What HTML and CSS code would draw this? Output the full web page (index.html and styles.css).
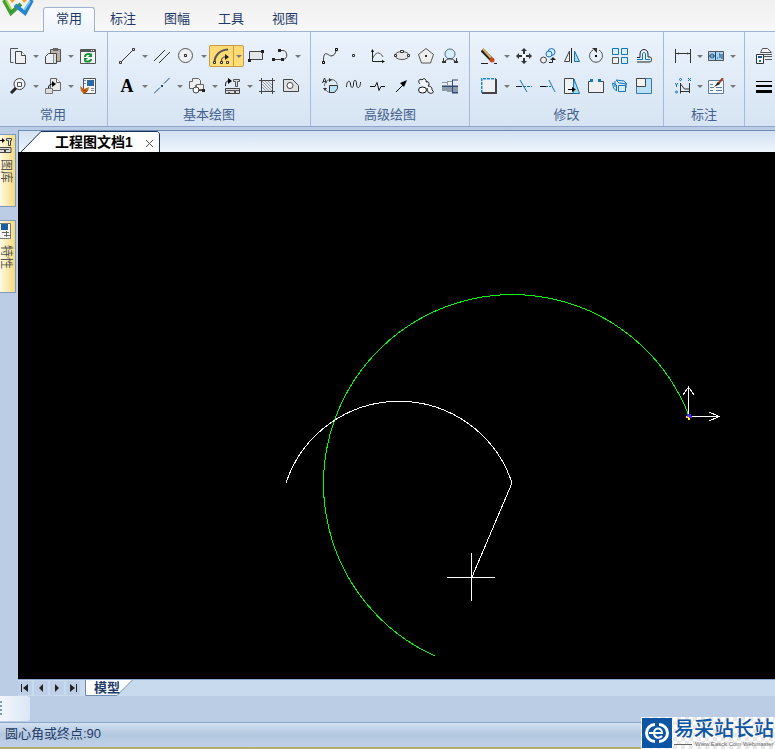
FILE: index.html
```
<!DOCTYPE html>
<html lang="zh-CN">
<head>
<meta charset="UTF-8">
<meta name="viewport" content="width=device-width, initial-scale=1.0">
<title>工程图文档1</title>
<link rel="stylesheet" href="styles.css">
</head>
<body>

<!-- Menu tabs -->
<header class="menubar">
    <svg class="app-logo" width="34" height="16" viewBox="0 0 34 16">
        <path d="M3 0L10 13L20 4" fill="none" stroke="#3d9b35" stroke-width="4"/>
        <path d="M5 0L10 9" stroke="#a8d64a" stroke-width="2"/>
        <path d="M14 5L24 13L31 0" fill="none" stroke="#2a84c8" stroke-width="4"/>
        <path d="M23 10L29 1" stroke="#7cc8f0" stroke-width="2"/>
        <path d="M9 0h5l-3 3zM21 0h5l-3 3z" fill="#f5a020"/>
    </svg>
    <nav class="menu-tabs">
        <button class="menu-tab active">常用</button>
        <button class="menu-tab">标注</button>
        <button class="menu-tab">图幅</button>
        <button class="menu-tab">工具</button>
        <button class="menu-tab">视图</button>
    </nav>
</header>

<!-- Ribbon -->
<section class="ribbon">
    <div class="group">
        <div class="tools">
            <button class="tool" aria-label="复制"><svg viewBox="0 0 16 16"><path d="M3.500 14.500H.5V.5H8" fill="none" stroke="#555"/><path d="M5.500 3.500h6l4 4v8h-10z" fill="#f0f0f0" stroke="#444"/><path d="M11.500 3.500v4h4" fill="#fff" stroke="#444"/></svg></button>
            <button class="drop" aria-label="复制选项"></button>
            <button class="tool" aria-label="粘贴"><svg viewBox="0 0 16 16"><path d="M5.500 1.500h10v12h-10z" fill="#b9b2a5" stroke="#555"/><path d="M8 0h5v3H8z" fill="#666"/><path d="M.5 8.500l3-3h5v10h-8z" fill="#e8f0f6" stroke="#444"/><path d="M8.500 5.500h3v10h-3" fill="#ddd" stroke="#444"/></svg></button>
            <button class="drop" aria-label="粘贴选项"></button>
            <button class="tool" aria-label="刷新"><svg viewBox="0 0 16 16"><path d="M.5 1.500h15v14H.5z" fill="#f2f6f4" stroke="#555"/><path d="M1 1h14v3H1z" fill="#555"/><path d="M11 2h1v1h-1zM13 2h1v1h-1z" fill="#fff"/><path d="M5 9c0-3 4-4 6-2M11 11c0 3-4 3-6 2" fill="none" stroke="#139038" stroke-width="2"/><path d="M12 5v4H8zM4 14v-4h4z" fill="#139038"/></svg></button>
        </div>
        <div class="tools">
            <button class="tool" aria-label="缩放"><svg viewBox="0 0 16 16"><circle cx="9.500" cy="6" r="5.500" fill="#eef3f7" stroke="#444"/><path d="M7.500 4.500h4v4h-4z" fill="#fff" stroke="#555"/><path d="M6 10l-5 5" stroke="#222" stroke-width="3"/></svg></button>
            <button class="drop" aria-label="缩放选项"></button>
            <button class="tool" aria-label="插入"><svg viewBox="0 0 16 16"><path d="M5.500.5h6l4 4v8h-10z" fill="#e8eaec" stroke="#666"/><path d="M11.500.5v4h4" fill="#fff" stroke="#666"/><path d="M.5 10.500h7v5h-7z" fill="#ddd" stroke="#777"/><path d="M3.500 10c0-3 2-4 4-4" fill="none" stroke="#000"/><path d="M7 3l4 3-4 3z"/></svg></button>
            <button class="drop" aria-label="插入选项"></button>
            <button class="tool" aria-label="特性匹配"><svg viewBox="0 0 16 16"><path d="M3.500.5h12v15h-12z" fill="#f4f6f8" stroke="#555"/><path d="M7 2h7v6H7z" fill="#2c67a8"/><path d="M4 2h2v1H4zM4 5h2v1H4zM11 10h3v1h-3zM11 12h3v1h-3z" fill="#789"/><path d="M0 8l4 3 5-2-1 4-4 3-3-3z" fill="#c86a18"/><path d="M3 13l3-1M4 15l3-2" stroke="#8a4008"/></svg></button>
        </div>
        <div class="group-name">常用</div>
    </div>

    <div class="group">
        <div class="tools">
            <button class="tool" aria-label="直线"><svg viewBox="0 0 16 16"><path d="M2 14L14 2" stroke="#333"/><path d="M.5 13.500h2v2h-2zM13.500.5h2v2h-2z" fill="#fff" stroke="#333"/></svg></button>
            <button class="drop" aria-label="直线选项"></button>
            <button class="tool" aria-label="平行线"><svg viewBox="0 0 16 16"><path d="M0 13L11 2M5 15L16 4" stroke="#2f3326"/></svg></button>
            <button class="tool" aria-label="圆"><svg viewBox="0 0 16 16"><circle cx="7.500" cy="7.500" r="7" fill="#eef1f4" stroke="#555"/><path d="M6.500 6.500h2v2h-2z" fill="#fff" stroke="#222"/></svg></button>
            <button class="drop" aria-label="圆选项"></button>
            <span class="split">
                <button class="tool" aria-label="圆弧"><svg viewBox="0 0 16 16"><path d="M1.500 14C2 7 7 2 15 1.500" fill="none" stroke="#555" stroke-width="2"/><path d="M8.500 14c0-4 1-5 4-5" fill="none" stroke="#222"/><path d="M12 6l4 3-4 3z" fill="#222"/><path d="M.5 13.500h2v2h-2zM7.500 13.500h2v2h-2zM13.500 13.500h2v2h-2z" fill="#fff" stroke="#333"/></svg></button>
                <button class="drop" aria-label="圆弧选项"></button>
            </span>
            <button class="tool" aria-label="矩形"><svg viewBox="0 0 16 16"><path d="M1.500 3.500h13v8h-13z" fill="#e3e6e9" stroke="#444"/><path d="M0 11h3v3H0zM13 2h3v3h-3z" fill="#222"/></svg></button>
            <button class="tool" aria-label="多段线"><svg viewBox="0 0 16 16"><path d="M7 2.500h4c5 0 5 9 0 9H1" fill="none" stroke="#444"/><path d="M6 1h3v3H6zM0 10h3v3H0zM9 10h3v3H9z" fill="#222"/></svg></button>
            <button class="drop" aria-label="多段线选项"></button>
        </div>
        <div class="tools">
            <button class="tool glyph" aria-label="文字">A</button>
            <button class="drop" aria-label="文字选项"></button>
            <button class="tool" aria-label="中心线"><svg viewBox="0 0 16 16"><path d="M0 15.500L6 9.500M10 5.500L15.500 0" stroke="#1c4a78"/><path d="M7 7h2v2H7z" fill="#1c4a78"/></svg></button>
            <button class="drop" aria-label="中心线选项"></button>
            <button class="tool" aria-label="轮廓"><svg viewBox="0 0 16 16"><path d="M3.500.5h6l2 2v5h-5v3h-6v-7h3z" fill="#eee" stroke="#666"/><path d="M7.500 6.500h7v5h-7z" fill="#eee" stroke="#666"/><circle cx="7" cy="12" r="3" fill="#fff" stroke="#444"/><path d="M9 12.500h5" stroke="#444"/><path d="M13 11h3v3h-3z" fill="#222"/></svg></button>
            <button class="drop" aria-label="轮廓选项"></button>
            <button class="tool" aria-label="图库"><svg viewBox="0 0 16 16"><path d="M1.500 8c0-4 1-5 3-5" fill="none" stroke="#000"/><path d="M4 0l4 3-4 3z"/><path d="M9.500 1.500h6v2h-2v5h-2v-5h-2z" fill="#ddd" stroke="#555"/><path d="M1.500 10.500h14v5h-14z" fill="#ddd" stroke="#444"/><path d="M2 12h13v1H2zM4 14h2v1H4zM10 13h2v2h-2z" fill="#555"/></svg></button>
            <button class="drop" aria-label="图库选项"></button>
            <button class="tool" aria-label="剖面线"><svg viewBox="0 0 16 16"><path d="M2.500 0v16M13.500 0v16M0 2.500h16M0 13.500h16" stroke="#444"/><path d="M3 9l4 4M3 6l7 7M3 3l10 10M6 3l7 7M9 3l4 4" stroke="#999"/></svg></button>
            <button class="tool" aria-label="填充"><svg viewBox="0 0 16 16"><path d="M.5 1.500h9l6 6v6H.5z" fill="#dfe2e5" stroke="#444"/><circle cx="7" cy="7.500" r="3" fill="#fff" stroke="#444"/></svg></button>
        </div>
        <div class="group-name">基本绘图</div>
    </div>

    <div class="group">
        <div class="tools">
            <button class="tool" aria-label="样条"><svg viewBox="0 0 16 16"><path d="M1.500 14C1 0 7 8 9 8c3 0 5-3 5-6" fill="none" stroke="#333"/><path d="M.5 13.500h2v2h-2zM13.500.5h2v2h-2z" fill="#fff" stroke="#000"/></svg></button>
            <button class="tool" aria-label="点"><svg viewBox="0 0 16 16"><path d="M6.500 6.500h2v2h-2z" fill="#fff" stroke="#333"/></svg></button>
            <button class="tool" aria-label="公式曲线"><svg viewBox="0 0 16 16"><path d="M2.500 2v11.500H14" fill="none" stroke="#222"/><path d="M3 10c2-6 7-7 10-1" fill="none" stroke="#555"/><path d="M1 4l1.500-3L4 4zM12 12l3 1.500-3 1.500z"/></svg></button>
            <button class="tool" aria-label="椭圆"><svg viewBox="0 0 16 16"><ellipse cx="8" cy="7.500" rx="7" ry="4" fill="#e5e7e9" stroke="#555"/><path d="M6.500 2.500h3v2h-3zM.5 6.500h2v2h-2zM13.500 6.500h2v2h-2z" fill="#fff" stroke="#333"/></svg></button>
            <button class="tool" aria-label="正多边形"><svg viewBox="0 0 16 16"><path d="M8 .5l7.500 6-3 8.500h-9L.5 6.500z" fill="#eee" stroke="#555"/><path d="M7 7h2v2H7z" fill="#333"/></svg></button>
            <button class="tool" aria-label="圆弧拟合"><svg viewBox="0 0 16 16"><circle cx="8" cy="6" r="5" fill="#d6effc" stroke="#4d6c80"/><path d="M1.500 10v4M14.500 10v4M3 13c3-3 7-3 10 0" fill="none" stroke="#333"/><path d="M0 13h4v2H0zM12 13h4v2h-4z" fill="#333"/></svg></button>
        </div>
        <div class="tools">
            <button class="tool" aria-label="局部放大"><svg viewBox="0 0 16 16"><circle cx="9" cy="8" r="6.500" fill="none" stroke="#666" stroke-dasharray="8 2"/><path d="M7.500 7.500h8v3l-3 4h-5z" fill="#b6e2f7" stroke="#333"/><path d="M.5 5l2-5 2 5M1 3.500h3" fill="none" stroke="#333"/><path d="M7 0v4l3-2zM1 10h4l-2 3z" fill="#333"/></svg></button>
            <button class="tool" aria-label="波浪线"><svg viewBox="0 0 16 16"><path d="M.5 9C.5 2 4.500 2 4.500 6s3 5 3 0 3-5 3 0 4 5 4-2" fill="none" stroke="#222"/></svg></button>
            <button class="tool" aria-label="双折线"><svg viewBox="0 0 16 16"><path d="M0 8.500h5l2-4 2 8 2-4h4" fill="none" stroke="#111"/></svg></button>
            <button class="tool" aria-label="箭头"><svg viewBox="0 0 16 16"><path d="M2 14L9 7" stroke="#000"/><path d="M13 2L10 9 6 5z"/></svg></button>
            <button class="tool" aria-label="云线"><svg viewBox="0 0 16 16"><path d="M2 6c-3-3 0-6 2-4 2-3 5 0 4 2 3-1 4 2 2 4 4 0 4 3 4 4 3 2 0 4-2 3-3 0-2-3-3-5" fill="#f3f7fb" stroke="#111"/><ellipse cx="4.500" cy="12" rx="4" ry="3" fill="#fff" stroke="#111"/></svg></button>
            <button class="tool" aria-label="孔轴"><svg viewBox="0 0 16 16"><path d="M0 4h5v9H0zM5 3h5v11H5zM10 1h6v15h-6z" fill="#8f9aa8"/><path d="M0 5h5v2H0zM6 4h4v3H6zM11 3h5v4h-5z" fill="#e8edf2"/><path d="M0 8h16v1H0zM10 14h6v1h-6zM10 2h1v13h-1z" fill="#2c4a7c"/></svg></button>
        </div>
        <div class="group-name">高级绘图</div>
    </div>

    <div class="group">
        <div class="tools">
            <button class="tool" aria-label="删除"><svg viewBox="0 0 16 16"><path d="M1 2l9 9" stroke="#222" stroke-width="4"/><path d="M2 1l8 9" stroke="#d8ad62" stroke-width="2"/><circle cx="11" cy="12" r="2.500" fill="#c84a18"/><path d="M0 15.500h7M13 15.500h3" stroke="#222"/></svg></button>
            <button class="drop" aria-label="删除选项"></button>
            <button class="tool" aria-label="平移"><svg viewBox="0 0 16 16"><path d="M8 0l3 3H9v3H7V3H5zM8 16l3-3H9v-3H7v3H5zM0 8l3-3v2h3v2H3v2zM16 8l-3-3v2h-3v2h3v2z" fill="#333"/><path d="M7 7h2v2H7z" fill="#fff"/></svg></button>
            <button class="tool" aria-label="平移复制"><svg viewBox="0 0 16 16"><circle cx="11.500" cy="4" r="3.500" fill="#d3edfb" stroke="#1673b8"/><circle cx="9" cy="6" r="3" fill="#d3edfb" stroke="#1673b8"/><circle cx="3.500" cy="12" r="3" fill="#eee" stroke="#444"/><path d="M9 14.500h3.500V11" fill="none" stroke="#222"/><path d="M10 12l3-3 3 3z" fill="#222"/></svg></button>
            <button class="tool" aria-label="镜像"><svg viewBox="0 0 16 16"><path d="M5.500 3v10.500h-5z" fill="#eee" stroke="#444"/><path d="M7.500 0v15" stroke="#222"/><path d="M10.500 3v10.500h5z" fill="#a9dcf5" stroke="#1b70a6"/></svg></button>
            <button class="tool" aria-label="旋转"><svg viewBox="0 0 16 16"><path d="M5 2a6.500 6.500 0 1 0 6 0" fill="none" stroke="#555"/><path d="M4 0h5v5z" fill="#333"/><path d="M7 7h2v2H7z"/></svg></button>
            <button class="tool" aria-label="阵列"><svg viewBox="0 0 16 16"><path d="M.5.5h6v6h-6zM9.500.5h6v6h-6zM9.500 9.500h6v6h-6z" fill="#d9eefa" stroke="#1673b8"/><path d="M.5 9.500h6v6h-6z" fill="#f2f2f2" stroke="#555"/></svg></button>
            <button class="tool" aria-label="等距线"><svg viewBox="0 0 16 16"><path d="M1 9.500h3V6c0-6 8-6 8 0v3h2c2 0 2 5 0 5H1" fill="none" stroke="#222"/><path d="M1 11.500h5.500V6c0-2 3-2 3 0v5.500H14" fill="none" stroke="#1673b8"/></svg></button>
        </div>
        <div class="tools">
            <button class="tool" aria-label="拉伸"><svg viewBox="0 0 16 16"><path d="M1 1h14v14H1z" fill="#edf1f4"/><path d="M.5 15V.5H15" fill="none" stroke="#168bdc" stroke-width="2" stroke-dasharray="3 1"/><path d="M1 15h14V1" fill="none" stroke="#444" stroke-width="2"/></svg></button>
            <button class="drop" aria-label="拉伸选项"></button>
            <button class="tool" aria-label="裁剪"><svg viewBox="0 0 16 16"><path d="M0 8.500h6" stroke="#222"/><path d="M7 8.500h9" stroke="#1673b8" stroke-dasharray="3 1"/><path d="M4 2l7 12" stroke="#1673b8"/></svg></button>
            <button class="tool" aria-label="延伸"><svg viewBox="0 0 16 16"><path d="M0 8.500h6" stroke="#000"/><path d="M6 8.500h6" stroke="#1673b8" stroke-dasharray="2 1"/><path d="M9 2l6 12" stroke="#1673b8"/></svg></button>
            <button class="tool" aria-label="移动"><svg viewBox="0 0 16 16"><path d="M.5.5h9v15h-9z" fill="#f0f2f4" stroke="#444"/><path d="M10 1l5.500 14.500H9z" fill="#a9dcf5" stroke="#1673b8"/><path d="M4 11.500h5" stroke="#000"/><path d="M8 9l4 2.500L8 14z"/></svg></button>
            <button class="tool" aria-label="打断"><svg viewBox="0 0 16 16"><path d="M3 3.500H.5v11h15v-11H13" fill="#edf1f4" stroke="#444"/><path d="M2 1h3v3H2zM10 1h3v3h-3z" fill="#1673b8"/></svg></button>
            <button class="tool" aria-label="分解"><svg viewBox="0 0 16 16"><path d="M6.500 7.500h7v6h-7zM4 2l8 1 3 3-8-1zM.5 5l4 2v6l-3-3zM3 3v6M14 5v5" fill="#d3edfb" stroke="#1673b8"/></svg></button>
            <button class="tool" aria-label="缩放图形"><svg viewBox="0 0 16 16"><path d="M.5.500h15v15H.5z" fill="#b9e0f4" stroke="#3c7ba6"/><path d="M.5.500h9v8h-9z" fill="#f2f2f2" stroke="#444"/></svg></button>
        </div>
        <div class="group-name">修改</div>
    </div>

    <div class="group narrow">
        <div class="tools">
            <button class="tool" aria-label="尺寸标注"><svg viewBox="0 0 16 16"><path d="M.5 1v14M15.500 1v14M1 5.500h14" stroke="#333"/><path d="M1 5.500l3-1v2zM15 5.500l-3-1v2z" fill="#333"/></svg></button>
            <button class="drop" aria-label="尺寸标注选项"></button>
            <button class="tool" aria-label="形位公差"><svg viewBox="0 0 16 16"><path d="M.5 3.500h15v9H.5z" fill="#a9d2ee" stroke="#555"/><circle cx="4" cy="8" r="2" fill="#fff" stroke="#124a7c"/><path d="M1 8h6M7.500 4v8M9 10h1M11 6h1v4M14 6v5" fill="none" stroke="#124a7c"/></svg></button>
            <button class="drop" aria-label="形位公差选项"></button>
        </div>
        <div class="tools">
            <button class="tool" aria-label="坐标标注"><svg viewBox="0 0 16 16"><path d="M5.500 5v10.500M5.500 13.500H15M5.500 6l4 5h5V5M14.500 7v8" fill="none" stroke="#333"/><path d="M0 5l1.500 2L3 5M1.500 7v2M13 0l3 3M16 0l-3 3" fill="none" stroke="#0b70c4"/><circle cx="5.500" cy="1.500" r="1" fill="none" stroke="#0b70c4"/><circle cx="1.500" cy="14" r="1" fill="none" stroke="#0b70c4"/></svg></button>
            <button class="drop" aria-label="坐标标注选项"></button>
            <button class="tool" aria-label="标注编辑"><svg viewBox="0 0 16 16"><path d="M.5 2.500h15v13H.5z" fill="#f4f7f9" stroke="#5d7fa0"/><path d="M2 6.500h3M2 9.500h4M2 12.500h3M8 9.500h6M8 12.500h6" stroke="#5d7fa0"/><path d="M15 0L10 6" stroke="#a0401c" stroke-width="2"/><path d="M10 4l2 2-6 3z" fill="#222"/></svg></button>
            <button class="drop" aria-label="标注编辑选项"></button>
        </div>
        <div class="group-name">标注</div>
    </div>

    <div class="group last">
        <div class="tools">
            <button class="tool" aria-label="图层"><svg viewBox="0 0 16 16"><path d="M4.500 4.500l2-4h5l4 4zM6 8.500h10M9 11.500h7M7 6.500h9" fill="#f4f4f4" stroke="#555"/><path d="M.5 6.500h7v9h-7z" fill="#fff" stroke="#333"/><path d="M2 8h4v2H2z" fill="#16539a"/><path d="M3 12h2v2H3z" fill="#1673b8"/></svg></button>
        </div>
        <div class="tools">
            <button class="tool" aria-label="线宽"><svg viewBox="0 0 16 16"><path d="M0 3h16v1H0zM0 7h16v2H0zM0 12h16v3H0z"/></svg></button>
        </div>
    </div>
</section>

<!-- Drawing area -->
<main class="workspace">
    <aside class="dock">
        <button class="dock-tab">
            <svg viewBox="0 0 16 16"><path d="M0 3.500h7" stroke="#000"/><path d="M6 1l3 2.500L6 6z"/><path d="M10.500 1.500h5v2h-1v5h-2v-5h-2z" fill="#ddd" stroke="#444"/><path d="M0 10.500h15v5H0z" fill="#ddd" stroke="#444"/><path d="M1 12h12v1H1zM8 13h2v2H8z" fill="#444"/></svg>
            <span>图库</span>
        </button>
        <button class="dock-tab">
            <svg viewBox="0 0 16 16"><path d="M2.500.5h12v15h-12z" fill="#f6f6f6" stroke="#777"/><path d="M5 1h7v6H5z" fill="#1d5c9e"/><path d="M6 9h7v1H6zM8 12h6v1H8zM11 8v6h-1V8z" fill="#666"/></svg>
            <span>特性</span>
        </button>
    </aside>
    <div class="document">
        <div class="doc-tabs">
            <div class="doc-tab">
                <svg class="tab-shape" width="139" height="21" viewBox="0 0 139 21"><path d="M0 21L20 .5H136.500L138.500 2.500V21" fill="#fff" stroke="#16305c"/></svg>
                <button class="doc-name">工程图文档1</button>
                <button class="doc-close" aria-label="关闭"><svg width="9" height="9" viewBox="0 0 9 9"><path d="M1 1l7 7M8 1L1 8" stroke="#555"/></svg></button>
            </div>
        </div>
        <div class="canvas">
            <svg class="drawing" width="757" height="527" viewBox="0 0 757 527">
                <path d="M671 264A189 189 0 1 0 417 504" class="green"/>
                <path d="M268 331A119 119 0 0 1 494 331L454 425" class="white"/>
                <!-- crosshair -->
                <path d="M429 425.500H477M453.500 401V449" class="white"/>
                <!-- origin axes -->
                <path d="M670.500 264V235M665 243L670.500 235L676 243M671 264.500H701M691 260L701 264.500L691 269" class="white"/>
                <path d="M668 264h5v2h-5zM670 266h2v2h-2z" fill="#ff0"/>
                <path d="M669 262h4v2h-4zM671 264h3v2h-3z" fill="#33f"/>
                <path d="M669 264h2v1h-2z" fill="#f0f"/>
            </svg>
        </div>
        <div class="sheet-bar">
            <button class="sheet-nav" aria-label="第一页"><svg viewBox="0 0 8 8"><path d="M0 0h1v8H0zM7 0v8L2 4z"/></svg></button>
            <button class="sheet-nav" aria-label="上一页"><svg viewBox="0 0 8 8"><path d="M6 0v8L2 4z"/></svg></button>
            <button class="sheet-nav" aria-label="下一页"><svg viewBox="0 0 8 8"><path d="M2 0v8l4-4z"/></svg></button>
            <button class="sheet-nav" aria-label="最后一页"><svg viewBox="0 0 8 8"><path d="M1 0v8l5-4zM7 0h1v8H7z"/></svg></button>
            <div class="sheet-tab">
                <svg class="tab-shape" width="48" height="16" viewBox="0 0 48 16"><path d="M.5 0V15.500H32L47.500 0" fill="#fff" stroke="#6d8db5"/></svg>
                <button class="sheet-name">模型</button>
            </div>
        </div>
    </div>
</main>

<div class="toolbar"><div class="grip"></div></div>

<footer class="status">圆心角或终点:90</footer>

<div class="watermark">
    <svg width="30" height="30" viewBox="0 0 30 30">
        <path d="M0 0h30v30H0z" fill="#0b55a4"/>
        <path d="M13 6.500A8.500 8.500 0 0 0 13 23.500M17 6.500A8.500 8.500 0 0 1 17 23.500" fill="none" stroke="#fff" stroke-width="3"/>
        <path d="M7 15h13c0-6-8-6-8 0 0 5 5 6 8 3" fill="none" stroke="#fff" stroke-width="2"/>
    </svg>
    <div class="mark-text">
        <strong>易采站长站</strong>
        <small>Www.Easck.Com Webmaster</small>
    </div>
</div>

</body>
</html>
```
FILE: styles.css
```
* {
    box-sizing: border-box;
}

body {
    margin: 0;
    min-height: 100vh;
    display: flex;
    flex-direction: column;
    overflow: hidden;
    position: relative;
    background-color: #bacde5;
    color: #1e3a66;
    font-family: "Liberation Sans", "Noto Sans CJK SC", sans-serif;
    font-size: 13px;
}

button {
    margin: 0;
    padding: 0;
    border: 0;
    background: none;
    color: inherit;
    font: inherit;
}

svg {
    display: block;
}

/* Menu tabs */
.menubar {
    position: relative;
    height: 32px;
    padding-left: 43px;
    background: linear-gradient(#f0f0f0, #f8f8f8);
    border-bottom: 1px solid #9db3d0;
}

.app-logo {
    position: absolute;
    left: 1px;
    top: 0;
}

.menu-tabs {
    display: flex;
    gap: 2px;
    padding-top: 7px;
}

.menu-tab {
    width: 52px;
    height: 25px;
    padding-bottom: 2px;
    line-height: 22px;
}

.menu-tab.active {
    border: 1px solid #9db3d0;
    border-bottom: 0;
    border-radius: 3px 3px 0 0;
    background: linear-gradient(#fafdff, #edf4fd);
}

/* Ribbon */
.ribbon {
    display: flex;
    height: 95px;
    background: linear-gradient(#ebf3fc, #d6e4f3);
    border-bottom: 1px solid #8ba6ca;
    overflow: hidden;
}

.group {
    flex: none;
    padding: 12px 7px 0;
    border-right: 1px solid #a5bad5;
}

.group:first-child {
    padding-left: 6px;
}

.group.last {
    border-right: 0;
}

.tools {
    display: flex;
    height: 24px;
    margin-bottom: 6px;
}

.tool {
    flex: none;
    width: 24px;
    height: 24px;
    padding: 4px;
}

.tool svg {
    width: 16px;
    height: 16px;
}

.tool.glyph {
    padding: 0;
    color: #000;
    font-family: "Liberation Serif", serif;
    font-size: 18px;
    font-weight: bold;
    line-height: 24px;
}

.drop {
    display: flex;
    align-items: center;
    justify-content: center;
    flex: none;
    width: 11px;
}

.drop::after {
    content: "";
    border: 3px solid transparent;
    border-top-color: #777;
    border-bottom: 0;
}

.narrow .drop {
    width: 9px;
}

.split {
    display: flex;
    align-items: center;
    margin: 1px 0;
    border-radius: 2px;
    outline: 1px solid #c99c42;
    outline-offset: -1px;
    background: linear-gradient(#fdd876, #ffdf78);
}

.split .drop {
    height: 22px;
    border-left: 1px solid #c99c42;
}

.group-name {
    margin-top: 9px;
    line-height: 16px;
    text-align: center;
    color: #44608c;
}

/* Workspace */
.workspace {
    flex: 1;
    display: flex;
    padding-top: 3px;
}

.dock {
    flex: none;
    width: 18px;
    padding-top: 4px;
}

.dock-tab {
    display: flex;
    flex-direction: column;
    align-items: flex-start;
    gap: 6px;
    width: 24px;
    height: 73px;
    margin: 0 0 13px -8px;
    padding: 2px 0 0 3px;
    border: 1px solid #7f9abd;
    background: linear-gradient(90deg, #fffbe6 30%, #f5da7c);
    color: #555;
}

.dock-tab svg {
    width: 16px;
    height: 16px;
}

.dock-tab span {
    margin-left: 4px;
    writing-mode: vertical-rl;
    text-orientation: sideways;
    font-size: 12px;
    line-height: 12px;
}

.document {
    flex: 1;
    min-width: 0;
    display: flex;
    flex-direction: column;
}

.doc-tabs {
    height: 22px;
    padding-left: 2px;
    border-top: 1px solid #6d8db5;
    border-left: 1px solid #6d8db5;
    background: linear-gradient(#d3e1f2, #eef5fd);
}

.doc-tab {
    position: relative;
    display: flex;
    align-items: center;
    width: 139px;
    height: 21px;
    padding-left: 34px;
}

.tab-shape {
    position: absolute;
    left: 0;
    top: 0;
}

.doc-name {
    position: relative;
    color: #000;
    font-size: 14px;
    font-weight: bold;
    line-height: 18px;
}

.doc-close {
    position: relative;
    margin: 3px 0 0 auto;
    padding-right: 6px;
}

.canvas {
    flex: 1;
    position: relative;
    min-height: 320px;
    background-color: #000;
    overflow: hidden;
}

.drawing {
    position: absolute;
    left: 0;
    top: 0;
    shape-rendering: crispEdges;
}

.green {
    fill: none;
    stroke: #00ff00;
}

.white {
    fill: none;
    stroke: #fff;
}

.sheet-bar {
    display: flex;
    align-items: center;
    height: 17px;
    border-top: 1px solid #8ba6ca;
    background-color: #c7daee;
}

.sheet-nav {
    width: 14px;
    height: 14px;
    margin-right: 2px;
    padding: 3px;
    background-color: #bdd0e8;
}

.sheet-nav svg {
    width: 8px;
    height: 8px;
    fill: #222;
}

.sheet-tab {
    position: relative;
    width: 48px;
    height: 16px;
    margin-left: 3px;
    padding-left: 9px;
}

.sheet-name {
    position: relative;
    display: block;
    font-weight: bold;
    line-height: 16px;
}

/* Bottom bars */
.toolbar {
    height: 26px;
}

.grip {
    width: 30px;
    height: 25px;
    padding-top: 5px;
    border-radius: 0 3px 3px 0;
    background: linear-gradient(90deg, #f2f7fd, #dbe7f5);
}

.grip::before {
    content: "";
    display: block;
    width: 2px;
    height: 14px;
    background: repeating-linear-gradient(#7f9abd 0 2px, transparent 2px 4px);
}

.status {
    height: 27px;
    padding-left: 5px;
    border-top: 1px solid #8ba6ca;
    border-bottom: 2px solid #b5ae6c;
    background: linear-gradient(#d3e1f1, #b3c7e0 50%, #c0d2e9);
    line-height: 21px;
}

.watermark {
    position: absolute;
    right: 0;
    bottom: 0;
    display: flex;
    gap: 2px;
    width: 134px;
    height: 32px;
    padding: 1px;
    overflow: hidden;
    background: repeating-conic-gradient(#e8e8e8 0 25%, #fff 0 50%) 0 0 / 8px 8px;
}

.watermark svg {
    flex: none;
}

.mark-text strong {
    display: block;
    color: #0b55a4;
    font-size: 20px;
    font-weight: 500;
    line-height: 22px;
    white-space: nowrap;
}

.mark-text small {
    display: flex;
    align-items: center;
    gap: 3px;
    font-size: 6px;
    line-height: 8px;
    color: #666;
    white-space: nowrap;
}

.mark-text small::before {
    content: "";
    width: 18px;
    height: 1px;
    background-color: #666;
}
```
